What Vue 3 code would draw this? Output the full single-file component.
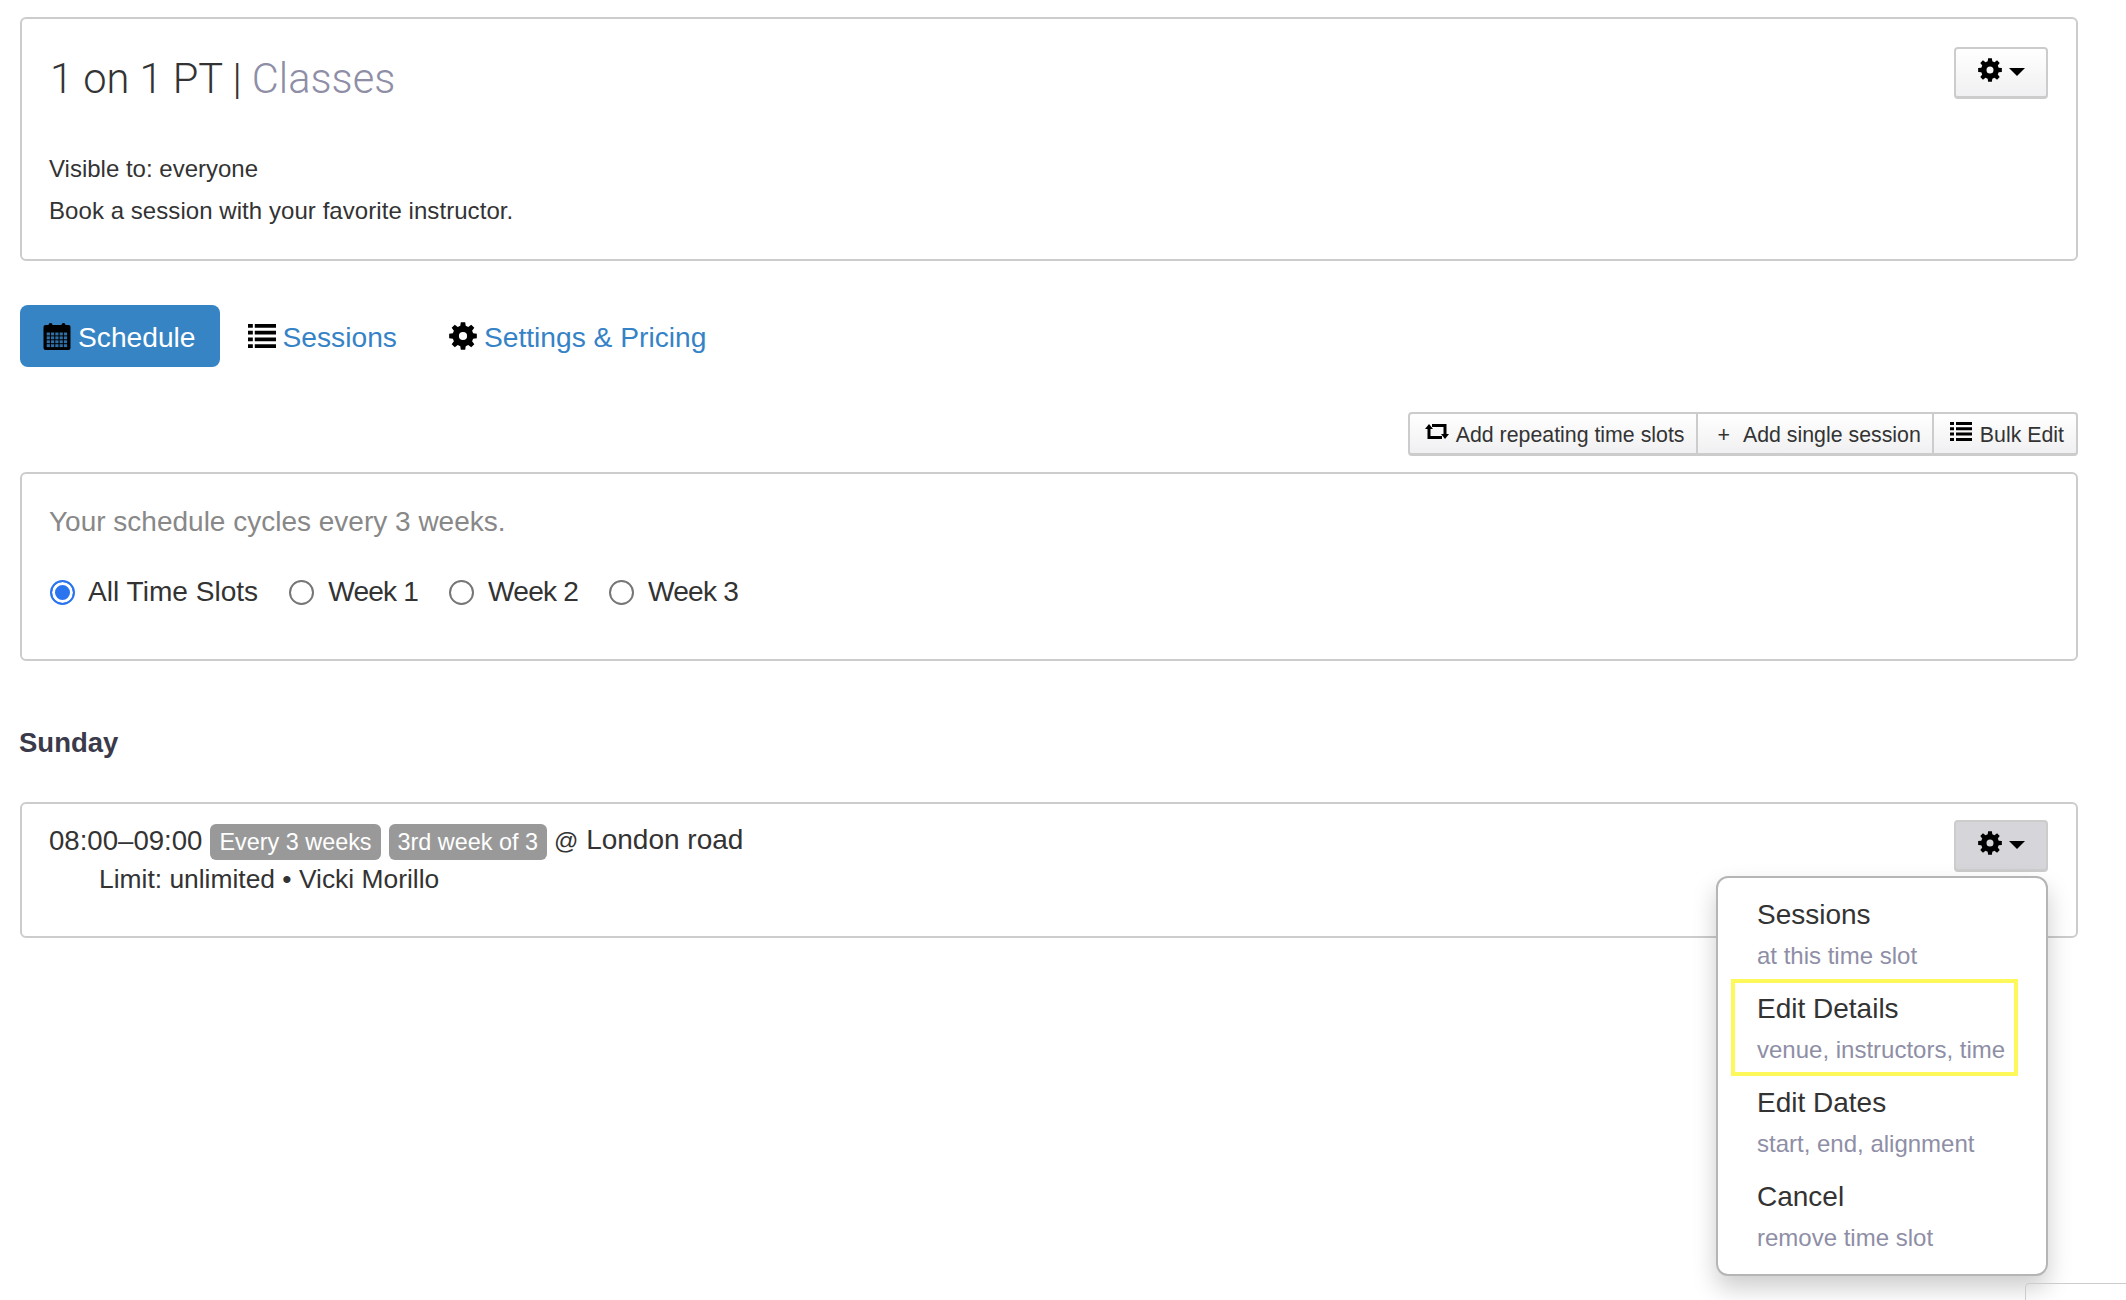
<script setup>
const tabs = [
  { label: 'Sessions', icon: 'list' },
  { label: 'Settings & Pricing', icon: 'cog' },
]
const menu = [
  { title: 'Sessions', sub: 'at this time slot' },
  { title: 'Edit Details', sub: 'venue, instructors, time', marked: true },
  { title: 'Edit Dates', sub: 'start, end, alignment' },
  { title: 'Cancel', sub: 'remove time slot' },
]
const weeks = ['All Time Slots', 'Week 1', 'Week 2', 'Week 3']

function buildCog() {
  const pts = []
  const polar = (r, deg) => {
    const a = (deg * Math.PI) / 180
    return `${(12 + r * Math.sin(a)).toFixed(2)} ${(12 - r * Math.cos(a)).toFixed(2)}`
  }
  for (let i = 0; i < 8; i++) {
    const c = i * 45
    pts.push(polar(9, c - 15), polar(12, c - 9), polar(12, c + 9), polar(9, c + 15))
  }
  return `M${pts.join('L')}ZM12 8.500a3.500 3.500 0 1 0 0 7 3.500 3.500 0 0 0 0-7Z`
}
const cog = buildCog()
</script>

<template>
  <div class="page">
    <section class="card intro">
      <div class="intro-head">
        <h1 class="title">1 on 1 PT | <span class="muted">Classes</span></h1>
        <button class="btn gear">
          <svg class="cog" viewBox="0 0 24 24"><path :d="cog" fill-rule="evenodd" /></svg>
          <span class="caret"></span>
        </button>
      </div>
      <p class="line">Visible to: everyone</p>
      <p class="line long">Book a session with your favorite instructor.</p>
    </section>

    <nav class="tabs">
      <a class="tab active">
        <svg class="tab-icon cal" viewBox="0 0 27 28">
          <path d="M5 3a2 2 0 0 1 4 0h9a2 2 0 0 1 4 0h3a2 2 0 0 1 2 2v21a2 2 0 0 1-2 2H2a2 2 0 0 1-2-2V5a2 2 0 0 1 2-2z" fill="#000" />
          <g fill="#2e6fa6">
            <rect v-for="c in 20" :key="c" :x="3.2 + ((c - 1) % 5) * 4.3" :y="10.500 + Math.floor((c - 1) / 5) * 3.900" width="3.200" height="2.900" />
          </g>
        </svg>
        Schedule
      </a>
      <a v-for="t in tabs" :key="t.label" class="tab">
        <svg v-if="t.icon === 'list'" class="tab-icon" viewBox="0 0 29 25">
          <path d="M0 0h5v4H0zM7 0h22v4H7zM0 7h5v4H0zM7 7h22v4H7zM0 14h5v4H0zM7 14h22v4H7zM0 21h5v4H0zM7 21h22v4H7z" />
        </svg>
        <svg v-else class="tab-icon" viewBox="0 0 24 24"><path :d="cog" fill-rule="evenodd" /></svg>
        {{ t.label }}
      </a>
    </nav>

    <div class="toolbar">
      <button class="tool">
        <svg class="tool-icon wide" viewBox="0 0 24 15">
          <path d="M4 0l4 5H5.500v7H17v3H2.500V5H0zM7 0h14.500v10H24l-4 5-4-5h2.500V3H7z" />
        </svg>
        Add repeating time slots
      </button>
      <button class="tool"><span class="plus">+</span>Add single session</button>
      <button class="tool bulk">
        <svg class="tool-icon" viewBox="0 0 22 19">
          <path d="M0 0h4v3H0zM6 0h16v3H6zM0 5.300h4v3H0zM6 5.300h16v3H6zM0 10.600h4v3H0zM6 10.600h16v3H6zM0 16h4v3H0zM6 16h16v3H6z" />
        </svg>
        Bulk Edit
      </button>
    </div>

    <section class="card cycle">
      <p class="cycle-note">Your schedule cycles every 3 weeks.</p>
      <div class="radios">
        <label v-for="(w, i) in weeks" :key="w" class="radio" :class="{ tight: i > 0 }">
          <span class="dot" :class="{ on: i === 0 }"></span>{{ w }}
        </label>
      </div>
    </section>

    <h2 class="day">Sunday</h2>

    <section class="card slot">
      <div class="slot-body">
        <div class="slot-main">
          08:00–09:00
          <span class="badge">Every 3 weeks</span>
          <span class="badge">3rd week of 3</span>
          <span class="place"><span class="at">@</span> London road</span>
        </div>
        <div class="slot-sub">Limit: unlimited • Vicki Morillo</div>
      </div>
      <div class="menu-wrap">
        <button class="btn gear pressed">
          <svg class="cog" viewBox="0 0 24 24"><path :d="cog" fill-rule="evenodd" /></svg>
          <span class="caret"></span>
        </button>
        <ul class="menu">
          <li v-for="m in menu" :key="m.title" class="item">
            <div class="item-title">{{ m.title }}</div>
            <div class="item-sub">{{ m.sub }}</div>
            <span v-if="m.marked" class="mark"></span>
          </li>
        </ul>
      </div>
    </section>

    <div class="corner"></div>
  </div>
</template>

<style>
html, body { margin: 0; background: #fff; }
</style>

<style scoped>
.page {
  position: relative;
  box-sizing: border-box;
  height: 1300px;
  overflow: hidden;
  padding: 17px 48px 0 20px;
  font-family: "Liberation Sans", Arial, sans-serif;
  font-size: 24px;
  color: #333;
}
.card {
  box-sizing: border-box;
  border: 2px solid #ccc;
  border-radius: 6px;
  background: #fff;
}
.intro { height: 244px; padding: 28px 28px 0 27px; }
.intro-head { display: flex; justify-content: space-between; align-items: flex-start; height: 101px; }
.title {
  margin: 7px 0 0 1px;
  font-family: Roboto, "Liberation Sans", sans-serif;
  font-weight: 300;
  font-size: 41.6px;
  line-height: 50px;
  color: #333;
}
.muted { color: #8e8ea6; }
.line { margin: 0; height: 42px; line-height: 42px; }
.line.long { letter-spacing: 0.06px; }
.btn {
  box-sizing: border-box;
  display: flex;
  align-items: center;
  justify-content: center;
  gap: 7px;
  width: 94px;
  height: 52px;
  padding: 0 0 6px;
  border: 2px solid #ccc;
  border-bottom-width: 3px;
  border-radius: 4px;
  background: linear-gradient(#fff, #f0f0f2);
}
.btn.pressed { background: #d5d5da; }
.cog { width: 24px; height: 24px; }
.caret {
  width: 0;
  height: 0;
  margin-top: 4px;
  border-left: 8px solid transparent;
  border-right: 8px solid transparent;
  border-top: 8px solid #000;
}
.tabs { display: flex; align-items: stretch; height: 62px; margin-top: 44px; }
.tab {
  display: flex;
  align-items: center;
  gap: 7px;
  padding: 3px 24px 0 28px;
  font-size: 28.2px;
  color: #3583c6;
  border-radius: 8px;
}
.tab.active {
  padding: 3px 24px 0 23px;
  background: #3784c5;
  color: #fff;
}
.tab-icon { width: 28px; height: 28px; fill: #000; flex: none; margin-top: -3px; }
.toolbar { display: flex; justify-content: flex-end; height: 44px; margin-top: 45px; }
.tool {
  box-sizing: border-box;
  display: flex;
  align-items: center;
  gap: 7px;
  height: 44px;
  padding: 3px 11px 0 15px;
  margin-left: -2px;
  border: 2px solid #ccc;
  border-bottom-width: 3px;
  background: linear-gradient(#fff, #f0f0f2);
  font-family: inherit;
  font-size: 21.33px;
  color: #333;
}
.tool:first-child { border-radius: 4px 0 0 4px; }
.tool:last-child { border-radius: 0 4px 4px 0; }
.tool.bulk { gap: 8px; padding: 3px 12px 0 16px; }
.tool-icon { width: 22px; height: 19px; fill: #000; margin-top: -8px; }
.tool-icon.wide { width: 24px; height: 15px; }
.plus { margin: 0 6px 0 5px; }
.cycle { height: 189px; margin-top: 16px; padding: 0 27px; }
.cycle-note { margin: 0; padding-top: 30px; line-height: 36px; font-size: 28px; color: #888; }
.radios { display: flex; gap: 30px; margin-top: 34px; font-size: 28.1px; line-height: 36px; color: #333; }
.radio { display: flex; align-items: center; gap: 13px; }
.radio.tight { letter-spacing: -0.8px; gap: 14px; }
.dot {
  box-sizing: border-box;
  width: 25px;
  height: 25px;
  border: 2px solid #767676;
  border-radius: 50%;
  background: #fff;
  margin-left: 1px;
}
.dot.on { border-color: #2a74f0; background: #2a74f0; box-shadow: inset 0 0 0 3px #fff; }
.day { margin: 64px 0 0 -1px; font-size: 27.5px; line-height: 36px; font-weight: 700; color: #3a3a4a; }
.slot { display: flex; justify-content: space-between; height: 136px; margin-top: 41px; padding: 16px 28px 0 27px; }
.slot-main { display: flex; align-items: center; gap: 8px; font-size: 27.6px; line-height: 40px; color: #333; white-space: nowrap; }
.place { margin-left: -1px; font-size: 28px; }
.at { font-size: 24px; }
.slot-sub { margin-left: 50px; font-size: 26.4px; line-height: 36px; color: #333; }
.badge {
  display: inline-block;
  padding: 0 9px;
  height: 36px;
  line-height: 36px;
  border-radius: 6px;
  background: #999;
  color: #fff;
  font-size: 23.4px;
  margin-top: 2px;
}
.menu-wrap { position: relative; }
.menu {
  position: absolute;
  top: 56px;
  right: 0;
  box-sizing: border-box;
  width: 332px;
  height: 400px;
  margin: 0;
  padding: 17px 0 0;
  list-style: none;
  background: #fff;
  border: 2px solid #b5b5b5;
  border-radius: 12px;
  box-shadow: 0 12px 24px rgba(0, 0, 0, 0.2);
}
.item { position: relative; height: 94px; padding-left: 39px; }
.item-title { font-size: 28px; line-height: 40px; color: #333; }
.item-sub { margin-top: 1px; font-size: 24px; line-height: 40px; color: #8e8ea6; white-space: nowrap; }
.mark {
  position: absolute;
  left: 13px;
  top: -10px;
  width: 287px;
  height: 97px;
  box-sizing: border-box;
  border: 4px solid #fdf95a;
  pointer-events: none;
}
.corner {
  position: absolute;
  left: 2025px;
  top: 1283px;
  width: 120px;
  height: 60px;
  border: 1px solid #ccc;
  border-radius: 4px;
}
</style>
